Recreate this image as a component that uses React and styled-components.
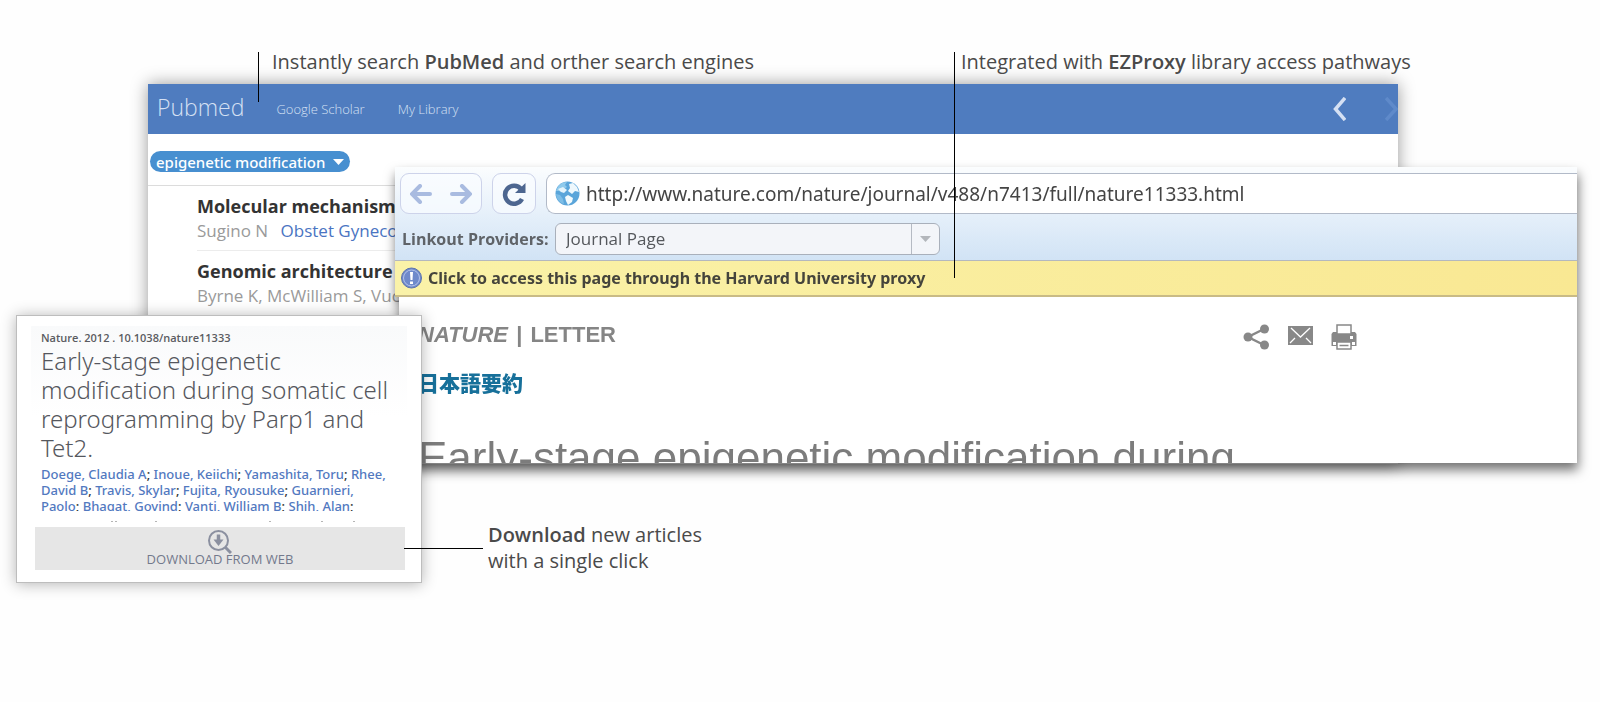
import React from 'react'
import styled, { createGlobalStyle } from 'styled-components'

const GlobalStyle = createGlobalStyle`
  *, *::before, *::after { box-sizing: border-box; }
  body {
    margin: 0;
    background: #fefefe;
    font-family: 'Open Sans', sans-serif;
    overflow-x: hidden;
  }
  h1, h2, h3, p, ul { margin: 0; padding: 0; font-weight: 400; }
  ul { list-style: none; }
  a { text-decoration: none; color: inherit; }
  button, input, select { font: inherit; color: inherit; margin: 0; }
`

// The collage of overlapping windows
const Stage = styled.main`
  position: relative;
  min-height: 100vh;
`

const Callout = styled.p`
  position: absolute;
  z-index: 4;
  left: ${({ $left }) => $left}px;
  top: ${({ $top }) => $top}px;
  height: ${({ $length }) => $length}px;
  padding-left: ${({ $gap }) => $gap}px;
  border-left: 1px solid #000;
  font-size: 20px;
  line-height: 20px;
  color: #4a4a4a;
  white-space: nowrap;
  pointer-events: none;

  b { font-weight: 600; }
`

const SideCallout = styled.div`
  position: absolute;
  z-index: 4;
  left: 404px;
  top: 522px;
  display: flex;
  align-items: center;
  gap: 5px;
  font-size: 20px;
  line-height: 26px;
  color: #4a4a4a;

  b { font-weight: 600; }
`

const Leader = styled.span`
  width: 79px;
  height: 1px;
  background: #000;
`

// Pubmed window
const SearchWindow = styled.section`
  position: absolute;
  left: 148px;
  right: 202px;
  top: 84px;
  padding-bottom: 148px;
  background: #fff;
  box-shadow: 0 0 16px rgba(0, 0, 0, 0.4);
`

const SearchHeader = styled.header`
  display: flex;
  align-items: center;
  height: 50px;
  padding-left: 9px;
  background: #4f7cbf;
  color: #d5e0f3;
  font-weight: 300;
  overflow: hidden;
`

const Brand = styled.a`
  font-size: 23px;
  line-height: 32px;
  margin: 0 32px 4px 0;
`

const Tabs = styled.nav`
  display: flex;
  flex: 1;
  gap: 33px;
  font-size: 13px;
  line-height: 20px;
`

const ArrowButton = styled.button`
  display: flex;
  padding: 0;
  border: 0;
  background: none;
  color: ${({ $faded }) => ($faded ? '#5f8aca' : '#d5e0f3')};
  margin-left: ${({ $faded }) => ($faded ? 39 : 0)}px;
`

const FilterBar = styled.div`
  display: flex;
  height: 52px;
  padding: 17px 0 0 2px;
  border-bottom: 1px solid #dcdcdc;
`

const Pill = styled.span`
  position: relative;
  display: flex;
  width: 200px;
  height: 21px;
  color: #fff;

  svg {
    position: absolute;
    right: 6px;
    top: 8px;
    pointer-events: none;
  }
`

const PillSelect = styled.select`
  appearance: none;
  width: 100%;
  padding: 0 6px;
  border: 0;
  border-radius: 11px;
  background: #478fd0;
  font-family: 'Noto Sans', sans-serif;
  font-size: 15px;
  line-height: 20px;
  font-weight: 500;
`

const Result = styled.li`
  margin-left: 49px;
  height: 65px;
  padding-top: 8px;
  border-bottom: ${({ $last }) => ($last ? 0 : 1)}px solid #ececec;
  white-space: nowrap;
`

const ResultTitle = styled.h3`
  font-size: 18px;
  line-height: 24px;
  font-weight: 700;
  color: #333;
`

const ResultMeta = styled.p`
  font-size: 17px;
  line-height: 26px;
  color: #9a9a9a;

  a { color: #4a74c2; margin-left: 8px; }
`

// Browser window
const BrowserWindow = styled.section`
  position: absolute;
  z-index: 2;
  left: 395px;
  right: 23px;
  top: 167px;
  filter: drop-shadow(1px 7px 6px rgba(0, 0, 0, 0.55));
`

const Toolbar = styled.div`
  display: flex;
  flex-direction: column;
  gap: 9px;
  padding: 6px 0 5px 5px;
  border-bottom: 1px solid #b4b8be;
  background: linear-gradient(#fbfdfe, #e6f0fa 50%, #d1e3f5);
`

const ToolRow = styled.div`
  display: flex;
  align-items: center;
`

const NavGroup = styled.div`
  display: flex;
  justify-content: space-between;
  width: ${({ $width }) => $width}px;
  height: 41px;
  margin-right: 10px;
  border: 1px solid #cdd3ea;
  border-radius: 9px;
  background: rgba(250, 252, 255, 0.7);
`

const NavButton = styled.button`
  display: flex;
  flex: 1;
  align-items: center;
  justify-content: center;
  padding: 0;
  border: 0;
  background: none;
`

const AddressBar = styled.label`
  display: flex;
  flex: 1;
  align-items: center;
  gap: 6px;
  height: 41px;
  padding-left: 8px;
  border: 1px solid #b2bac8;
  border-right: 0;
  border-radius: 9px 0 0 9px;
  background: #fff;
`

const AddressInput = styled.input`
  flex: 1;
  min-width: 0;
  padding: 0;
  border: 0;
  outline: 0;
  background: none;
  font-family: 'Noto Sans', sans-serif;
  font-size: 19px;
  line-height: 28px;
  color: #444;
`

const FieldLabel = styled.label`
  width: 155px;
  padding-left: 2px;
  font-size: 16px;
  line-height: 24px;
  font-weight: 700;
  color: #5f6368;
`

const ProviderField = styled.span`
  position: relative;
  display: flex;
  width: 385px;
  height: 32px;
`

const ProviderSelect = styled.select`
  appearance: none;
  width: 100%;
  padding: 0 38px 0 10px;
  border: 1px solid #a9b0bb;
  border-radius: 6px;
  background: #f3f5f9;
  font-size: 17px;
  line-height: 24px;
  color: #55585c;
`

const ProviderArrow = styled.span`
  position: absolute;
  right: 1px;
  top: 1px;
  bottom: 1px;
  width: 28px;
  display: flex;
  align-items: center;
  justify-content: center;
  border-left: 1px solid #b5bac3;
  pointer-events: none;
`

const ProxyNotice = styled.a`
  display: flex;
  align-items: center;
  gap: 6px;
  height: 36px;
  padding-left: 6px;
  border-bottom: 2px solid #c9bb86;
  background: linear-gradient(to right, #faf2a8, #f9e893);
  font-family: 'Noto Sans', sans-serif;
  font-size: 16px;
  line-height: 24px;
  font-weight: 700;
  color: #45443c;
`

const Article = styled.article`
  margin-left: 4px;
  padding: 25px 0 0 19px;
  background: #fff;
  font-family: 'Liberation Sans', 'Noto Sans CJK JP', sans-serif;
`

const ArticleTop = styled.div`
  display: flex;
  justify-content: space-between;
  height: 26px;
  margin-right: 220px;
`

const Kind = styled.h2`
  font-size: 22px;
  line-height: 26px;
  font-weight: 700;
  color: #858585;
`

const Bar = styled.span`
  margin: 0 2px;
`

const Actions = styled.div`
  display: flex;
  gap: 18px;
  padding-top: 2px;
`

const ActionButton = styled.button`
  display: flex;
  padding: 0;
  border: 0;
  background: none;
  color: #888;
`

const Translation = styled.a`
  display: block;
  margin-top: 23px;
  font-size: 21px;
  line-height: 26px;
  font-weight: 900;
  color: #17709a;
`

const Headline = styled.h1`
  margin-top: 39px;
  height: 27px;
  overflow: hidden;
  font-size: 44px;
  line-height: 44px;
  color: #7c7c7c;
  white-space: nowrap;
`

// Download card
const Card = styled.section`
  position: absolute;
  z-index: 3;
  left: 16px;
  top: 315px;
  width: 406px;
  padding: 10px 16px 12px 18px;
  border: 1px solid #bdbdbd;
  background: #fff;
  box-shadow: 0 1px 14px rgba(0, 0, 0, 0.3);
`

const Summary = styled.div`
  margin: 0 -2px 0 -4px;
  padding: 5px 16px 0 10px;
  background: linear-gradient(#f9fafb, #fff 90px);
`

const Doi = styled.p`
  font-size: 11px;
  line-height: 14px;
  font-weight: 600;
  color: #5a5c61;
`

const CardTitle = styled.h2`
  margin-top: 1px;
  font-family: 'Noto Sans', sans-serif;
  font-size: 24px;
  line-height: 29px;
  font-weight: 300;
  color: #55575d;
`

const Authors = styled.p`
  margin-top: 4px;
  height: 45px;
  overflow: hidden;
  font-family: 'Noto Sans', sans-serif;
  font-size: 13px;
  line-height: 16px;
  font-weight: 500;
  color: #333;

  a { color: #5279bf; }
`

const CutLine = styled.svg`
  display: block;
  margin: 10px 0 5px;
`

const DownloadButton = styled.button`
  display: flex;
  flex-direction: column;
  align-items: center;
  width: 100%;
  height: 43px;
  padding: 3px 0 0;
  border: 0;
  background: #e6e6e6;
  font-size: 13px;
  line-height: 16px;
  color: #73798c;

  svg { margin-bottom: -3px; }
`

const Chevron = ({ flip }) => (
  <svg width="13" height="24" viewBox="0 0 13 24" fill="none" stroke="currentColor" strokeWidth="3.5">
    <path d={flip ? 'M1 1 L11 12 L1 23' : 'M12 1 L2.500 12 L12 23'} />
  </svg>
)

const BoldArrow = ({ flip }) => (
  <svg width="22" height="20" viewBox="0 0 22 20" fill="none" stroke="#a9bbe0" strokeWidth="4" strokeLinecap="round">
    <path d={flip ? 'M2 10 H19 M12 2 L20 10 L12 18' : 'M20 10 H3 M10 2 L2 10 L10 18'} />
  </svg>
)

const Reload = () => (
  <svg width="24" height="24" viewBox="0 0 24 24">
    <path d="M20 17 A9 9 0 1 1 19 7" fill="none" stroke="#4d6690" strokeWidth="4.500" />
    <path d="M23.500 1 V11 H13 Z" fill="#4d6690" />
  </svg>
)

const Globe = () => (
  <svg width="25" height="25" viewBox="0 0 25 25">
    <circle cx="12.500" cy="12.500" r="12" fill="#5aa5da" />
    <path d="M1 10 C3 4 7 1 12 1 L10 4 L12 6 L9 8 L8 11 L4 10 Z" fill="#8fcaec" />
    <path d="M3 8 L8 6 L12 9 L9 12 L6 11 Z" fill="#e4f4fc" />
    <path d="M14 3 L18 2 L22 6 L24 11 L20 10 L17 13 L13 10 L15 7 Z" fill="#eef8fd" />
    <path d="M10 16 L13 14 L18 17 L17 21 L13 24 L11 20 Z" fill="#f2fafd" />
    <path d="M1 13 L5 14 L8 18 L9 23 C5 22 1 18 1 13 Z" fill="#7dbde6" />
  </svg>
)

const Notice = () => (
  <svg width="21" height="22" viewBox="0 0 21 22">
    <circle cx="10.500" cy="11" r="10" fill="#6f8acb" stroke="#5b72ae" />
    <circle cx="10.500" cy="11" r="8" fill="none" stroke="#b4c3ea" />
    <path d="M9 5 H12 L11.500 13 H9.500 Z M9 14.500 H12 V17 H9 Z" fill="#fff" />
  </svg>
)

const Share = () => (
  <svg width="27" height="26" viewBox="0 0 27 26" fill="currentColor">
    <path d="M21 5 L5 13 L21 21" fill="none" stroke="currentColor" strokeWidth="2.500" />
    <circle cx="5" cy="13" r="4.500" />
    <circle cx="21.500" cy="5" r="4.500" />
    <circle cx="21.500" cy="21" r="4.500" />
  </svg>
)

const Mail = () => (
  <svg width="25" height="22" viewBox="0 0 25 22">
    <rect y="2" width="25" height="19" fill="currentColor" />
    <path d="M3 4 L12.500 13 L22 4 M2 19 L7 14 M23 19 L18 14" fill="none" stroke="#fff" strokeWidth="1.300" />
  </svg>
)

const Printer = () => (
  <svg width="26" height="26" viewBox="0 0 26 26">
    <path d="M2 8 H24 L25.500 10 V22 H0.500 V10 Z" fill="currentColor" />
    <rect x="6" y="1" width="14" height="9" fill="#fff" stroke="currentColor" strokeWidth="1.500" />
    <path d="M19 12 H22 V15 H19 Z M2 18 H5 V21 H2 Z M21 18 H24 V21 H21 Z" fill="#fff" />
    <rect x="6" y="18" width="14" height="7" fill="#fff" stroke="currentColor" strokeWidth="1.500" />
    <path d="M8.500 21.500 H17.500" stroke="currentColor" strokeWidth="1.500" />
  </svg>
)

const DownloadGlyph = () => (
  <svg width="24" height="24" viewBox="0 0 24 24" fill="none" stroke="#8b90a0">
    <circle cx="10.500" cy="10.500" r="9.500" strokeWidth="2" />
    <path d="M17.500 17.500 L23 23" strokeWidth="3" />
    <path d="M10.500 4.500 V11" strokeWidth="3.500" />
    <path d="M5.500 9.500 H15.500 L10.500 16 Z" fill="#8b90a0" stroke="none" />
  </svg>
)

const Caret = ({ color }) => (
  <svg width="11" height="6" viewBox="0 0 11 6" fill={color}>
    <path d="M0 0 H11 L5.500 6 Z" />
  </svg>
)

const authors = [
  'Doege, Claudia A',
  'Inoue, Keiichi',
  'Yamashita, Toru',
  'Rhee, David B',
  'Travis, Skylar',
  'Fujita, Ryousuke',
  'Guarnieri, Paolo',
  'Bhagat, Govind',
  'Vanti, William B',
  'Shih, Alan',
]

const App = () => (
  <>
    <GlobalStyle />
    <Stage>
      <Callout $left={258} $top={52} $length={50} $gap={13}>
        Instantly search <b>PubMed</b> and orther search engines
      </Callout>
      <Callout $left={954} $top={52} $length={226} $gap={6}>
        Integrated with <b>EZProxy</b> library access pathways
      </Callout>

      <SearchWindow>
        <SearchHeader>
          <Brand href="#pubmed">Pubmed</Brand>
          <Tabs>
            <a href="#scholar">Google Scholar</a>
            <a href="#library">My Library</a>
          </Tabs>
          <ArrowButton aria-label="Back">
            <Chevron />
          </ArrowButton>
          <ArrowButton $faded aria-label="Forward">
            <Chevron flip />
          </ArrowButton>
        </SearchHeader>
        <FilterBar>
          <Pill>
            <PillSelect aria-label="Search term">
              <option>epigenetic modification</option>
            </PillSelect>
            <Caret color="#fff" />
          </Pill>
        </FilterBar>
        <ul>
          <Result>
            <ResultTitle>Molecular mechanism</ResultTitle>
            <ResultMeta>
              Sugino N <a href="#journal">Obstet Gyneco</a>
            </ResultMeta>
          </Result>
          <Result $last>
            <ResultTitle>Genomic architecture</ResultTitle>
            <ResultMeta>Byrne K, McWilliam S, Vuc</ResultMeta>
          </Result>
        </ul>
      </SearchWindow>

      <BrowserWindow>
        <Toolbar>
          <ToolRow>
            <NavGroup $width={82}>
              <NavButton aria-label="Previous page">
                <BoldArrow />
              </NavButton>
              <NavButton aria-label="Next page">
                <BoldArrow flip />
              </NavButton>
            </NavGroup>
            <NavGroup $width={44}>
              <NavButton aria-label="Reload">
                <Reload />
              </NavButton>
            </NavGroup>
            <AddressBar>
              <Globe />
              <AddressInput
                aria-label="Address"
                defaultValue="http://www.nature.com/nature/journal/v488/n7413/full/nature11333.html"
              />
            </AddressBar>
          </ToolRow>
          <ToolRow>
            <FieldLabel htmlFor="provider">Linkout Providers:</FieldLabel>
            <ProviderField>
              <ProviderSelect id="provider">
                <option>Journal Page</option>
              </ProviderSelect>
              <ProviderArrow>
                <Caret color="#b3b6bb" />
              </ProviderArrow>
            </ProviderField>
          </ToolRow>
        </Toolbar>
        <ProxyNotice href="#proxy">
          <Notice />
          Click to access this page through the Harvard University proxy
        </ProxyNotice>
        <Article>
          <ArticleTop>
            <Kind>
              <i>NATURE</i> <Bar>|</Bar> LETTER
            </Kind>
            <Actions>
              <ActionButton aria-label="Share">
                <Share />
              </ActionButton>
              <ActionButton aria-label="Email">
                <Mail />
              </ActionButton>
              <ActionButton aria-label="Print">
                <Printer />
              </ActionButton>
            </Actions>
          </ArticleTop>
          <Translation href="#ja" lang="ja">
            日本語要約
          </Translation>
          <Headline>Early-stage epigenetic modification during</Headline>
        </Article>
      </BrowserWindow>

      <Card>
        <Summary>
          <Doi>Nature. 2012 . 10.1038/nature11333</Doi>
          <CardTitle>Early-stage epigenetic modification during somatic cell reprogramming by Parp1 and Tet2.</CardTitle>
          <Authors>
            {authors.map(name => (
              <React.Fragment key={name}>
                <a href="#author">{name}</a>;{' '}
              </React.Fragment>
            ))}
          </Authors>
          <CutLine width="340" height="1" viewBox="0 0 340 1" stroke="#b5b5b5">
            <path d="M70 .5 h2 M74 .5 h2 M114 .5 h2 M228 .5 h2 M280 .5 h2 M312 .5 h2" />
          </CutLine>
        </Summary>
        <DownloadButton>
          <DownloadGlyph />
          DOWNLOAD FROM WEB
        </DownloadButton>
      </Card>

      <SideCallout>
        <Leader />
        <p>
          <b>Download</b> new articles
          <br />
          with a single click
        </p>
      </SideCallout>
    </Stage>
  </>
)

export default App
